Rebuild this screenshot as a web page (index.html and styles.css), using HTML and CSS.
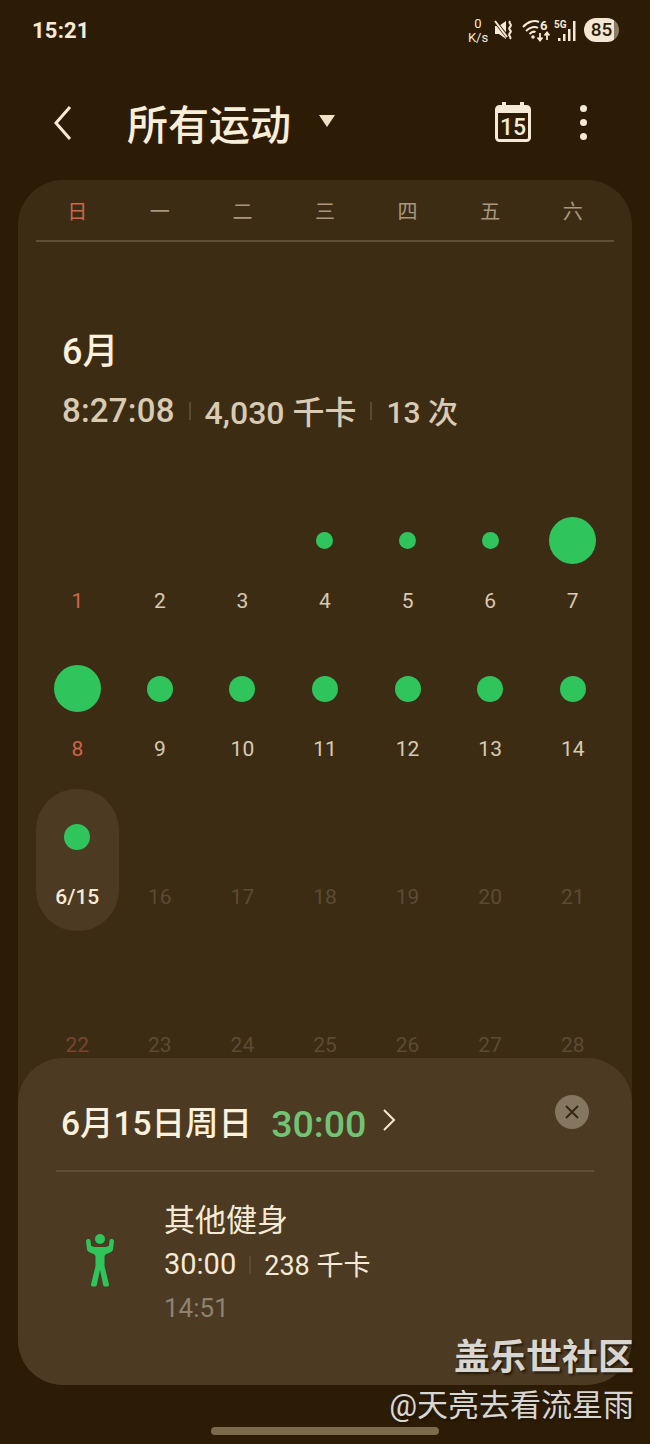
FILE: index.html
```html
<!DOCTYPE html>
<html lang="zh-CN">
<head>
    <meta charset="UTF-8">
    <meta name="viewport" content="width=device-width, initial-scale=1.0">
    <title>所有运动</title>
    <link rel="stylesheet" href="styles.css">
</head>
<body>
<div class="page">

    <!-- status bar -->
    <div class="status">
        <span class="clock">15:21</span>
        <div class="status-icons">
            <div class="speed"><span>0</span><span>K/s</span></div>
            <svg class="ic-mute" width="20" height="20" viewBox="0 0 20 20">
                <path d="M1 6h4l7-5v18l-7-5H1z" fill="#f6ead6"/>
                <path d="M0 0l15 19" stroke="#2c1b05" stroke-width="3.500"/>
                <path d="M1 1l12 16" stroke="#f6ead6" stroke-width="2"/>
                <path d="M16 1c-2 3 3 3 0 6s3 3 0 6 2 3 0 6" fill="none" stroke="#f6ead6" stroke-width="2"/>
            </svg>
            <svg class="ic-wifi" width="28" height="24" viewBox="0 0 28 24">
                <path d="M1 9c5-6 12-7 16-5M4 13c4-4 9-5 12-3M7.500 16c2-2 4-3 6-2" fill="none" stroke="#f6ead6" stroke-width="2"/>
                <circle cx="11" cy="19" r="1.800" fill="#f6ead6"/>
                <text class="wifi-6" x="18" y="12">6</text>
                <path d="M18 15v7M15.500 19.500l2.500 3 2.500-3M25 22v-7M22.500 17.500l2.500-3 2.500 3" fill="none" stroke="#f6ead6" stroke-width="1.800"/>
            </svg>
            <svg class="ic-signal" width="24" height="24" viewBox="0 0 24 24">
                <text class="signal-5g" x="0" y="10">5G</text>
                <rect x="4" y="20" width="2.500" height="3" fill="#f6ead6"/>
                <rect x="9" y="16" width="2.500" height="7" fill="#f6ead6"/>
                <rect x="14" y="11" width="2.500" height="12" fill="#f6ead6"/>
                <rect x="19" y="3" width="2.500" height="20" fill="#f6ead6"/>
            </svg>
            <div class="battery">85</div>
        </div>
    </div>

    <!-- title bar -->
    <div class="topbar">
        <svg class="back" width="20" height="36" viewBox="0 0 20 36">
            <path d="M17 2L3 18l14 16" fill="none" stroke="#f6ead6" stroke-width="3"/>
        </svg>
        <h1>所有运动</h1>
        <svg class="caret" width="16" height="12" viewBox="0 0 16 12">
            <path d="M0 0h16L8 12z" fill="#f0e2c8"/>
        </svg>
        <svg class="cal" width="36" height="40" viewBox="0 0 36 40">
            <path d="M9 1v6M27 1v6" stroke="#f6ead6" stroke-width="4" stroke-linecap="round"/>
            <rect x="1.500" y="4.500" width="33" height="34" rx="3" fill="none" stroke="#f6ead6" stroke-width="3"/>
            <rect x="2" y="5" width="32" height="6" fill="#f6ead6"/>
            <text x="18" y="33">15</text>
        </svg>
        <div class="more"><i></i><i></i><i></i></div>
    </div>

    <!-- calendar -->
    <div class="card">
        <div class="weekdays">
            <span class="sun">日</span><span>一</span><span>二</span><span>三</span><span>四</span><span>五</span><span>六</span>
        </div>

        <div class="month">
            <h2>6月</h2>
            <div class="stats">
                <span class="total">8:27:08</span><i class="sep"></i><span class="nudge">4,030 千卡</span><i class="sep"></i><span class="nudge count">13 次</span>
            </div>
        </div>

        <div class="weeks">
            <div class="day"><div class="slot"></div><span class="num sun">1</span></div>
            <div class="day"><div class="slot"></div><span class="num">2</span></div>
            <div class="day"><div class="slot"></div><span class="num">3</span></div>
            <div class="day"><div class="slot"><b class="dot s"></b></div><span class="num">4</span></div>
            <div class="day"><div class="slot"><b class="dot s"></b></div><span class="num">5</span></div>
            <div class="day"><div class="slot"><b class="dot s"></b></div><span class="num">6</span></div>
            <div class="day"><div class="slot"><b class="dot l"></b></div><span class="num">7</span></div>

            <div class="day"><div class="slot"><b class="dot l"></b></div><span class="num sun">8</span></div>
            <div class="day"><div class="slot"><b class="dot m"></b></div><span class="num">9</span></div>
            <div class="day"><div class="slot"><b class="dot m"></b></div><span class="num">10</span></div>
            <div class="day"><div class="slot"><b class="dot m"></b></div><span class="num">11</span></div>
            <div class="day"><div class="slot"><b class="dot m"></b></div><span class="num">12</span></div>
            <div class="day"><div class="slot"><b class="dot m"></b></div><span class="num">13</span></div>
            <div class="day"><div class="slot"><b class="dot m"></b></div><span class="num">14</span></div>

            <div class="day today"><div class="slot"><b class="dot m"></b></div><span class="num">6/15</span></div>
            <div class="day off"><div class="slot"></div><span class="num">16</span></div>
            <div class="day off"><div class="slot"></div><span class="num">17</span></div>
            <div class="day off"><div class="slot"></div><span class="num">18</span></div>
            <div class="day off"><div class="slot"></div><span class="num">19</span></div>
            <div class="day off"><div class="slot"></div><span class="num">20</span></div>
            <div class="day off"><div class="slot"></div><span class="num">21</span></div>

            <div class="day off"><div class="slot"></div><span class="num sun">22</span></div>
            <div class="day off"><div class="slot"></div><span class="num">23</span></div>
            <div class="day off"><div class="slot"></div><span class="num">24</span></div>
            <div class="day off"><div class="slot"></div><span class="num">25</span></div>
            <div class="day off"><div class="slot"></div><span class="num">26</span></div>
            <div class="day off"><div class="slot"></div><span class="num">27</span></div>
            <div class="day off"><div class="slot"></div><span class="num">28</span></div>
        </div>
    </div>

    <!-- bottom sheet, lies over the calendar -->
    <div class="sheet">
        <div class="sheet-head">
            <span class="sheet-date">6月15日周日</span>
            <span class="sheet-time">30:00</span>
            <svg class="sheet-arrow" width="14" height="24" viewBox="0 0 14 24">
                <path d="M2 2l10 10L2 22" fill="none" stroke="#f6ead6" stroke-width="2"/>
            </svg>
            <div class="close">
                <svg width="16" height="16" viewBox="0 0 16 16">
                    <path d="M2 2l12 12M14 2L2 14" stroke="#33240f" stroke-width="1.800"/>
                </svg>
            </div>
        </div>
        <div class="activity">
            <svg class="figure" width="32" height="54" viewBox="0 0 32 54">
                <circle cx="16" cy="5" r="5" fill="#2fc45c"/>
                <path d="M3 5.500c1-.8 3-.5 3.500 1l.5 5c1.500 1 3 1.500 5 1.500h8c2 0 3.500-.5 5-1.500l.5-5c.5-1.500 2.500-1.800 3.500-1 .8.500 1 1.300 1 2l-1 8c-.2 1.200-1 2-2 2.500l-5.500 2.500-1 1.500V32l4.500 18.500c.2 1.200-.6 2-1.800 2h-2c-1 0-1.700-.6-2-1.600L16 36l-3.200 14.900c-.3 1-1 1.600-2 1.600h-2c-1.200 0-2-.8-1.800-2L11.500 32V22l-1-1.500L5 18c-1-.5-1.800-1.300-2-2.500l-1-8c0-.7.200-1.500 1-2z" fill="#2fc45c"/>
            </svg>
            <div class="activity-info">
                <div class="activity-name">其他健身</div>
                <div class="activity-stats"><span class="activity-len">30:00</span><i class="sep"></i><span class="nudge">238 千卡</span></div>
                <div class="activity-at">14:51</div>
            </div>
        </div>
    </div>

    <div class="watermark">
        <div class="wm-big">盖乐世社区</div>
        <div class="wm-small">@天亮去看流星雨</div>
    </div>

    <div class="homebar"></div>
</div>
</body>
</html>
```

FILE: styles.css
```css
* {
    margin: 0;
    padding: 0;
    box-sizing: border-box;
}

body {
    background-color: #2c1b05;
    font-family: Roboto, "Noto Sans CJK SC", sans-serif;
    color: #f6ead6;
}

.page {
    position: relative;
    width: 650px;
    height: 1444px;
    overflow: hidden;
}

/* status bar */
.status {
    height: 60px;
    padding: 0 31px 0 32px;
    display: flex;
    align-items: center;
    justify-content: space-between;
}

.clock {
    font-size: 22px;
    font-weight: 700;
    letter-spacing: 0.2px;
}

.status-icons {
    display: flex;
    align-items: center;
}

.speed {
    width: 20px;
    display: flex;
    flex-direction: column;
    align-items: center;
    font-size: 13px;
    line-height: 14px;
    margin-right: 6px;
    margin-top: 2px;
}

.ic-mute {
    margin-right: 8px;
}

.ic-wifi {
    margin-right: 4px;
}

.wifi-6 {
    font-size: 13px;
    font-weight: 700;
    fill: #f6ead6;
}

.signal-5g {
    font-size: 10px;
    font-weight: 700;
    fill: #f6ead6;
}

.ic-signal {
    margin-right: 6px;
}

.battery {
    width: 35px;
    height: 24px;
    border-radius: 12px;
    background: linear-gradient(to right, #f3e6d2 86%, #8d7d64 86%);
    color: #2c1b05;
    font-size: 19px;
    font-weight: 500;
    line-height: 24px;
    text-align: center;
}

/* title bar */
.topbar {
    height: 120px;
    display: flex;
    align-items: center;
    padding-left: 53px;
}

.back {
    margin-right: 54px;
    margin-top: 5px;
}

h1 {
    font-size: 41px;
    font-weight: 500;
    line-height: 56px;
    margin-top: 12px;
    color: #f9eed9;
}

.caret {
    margin-left: 28px;
    margin-right: 160px;
    margin-top: 2px;
}

.cal {
    margin-top: 3px;
    margin-right: 49px;
}

.cal text {
    font-size: 23px;
    font-weight: 500;
    fill: #f6ead6;
    text-anchor: middle;
}

.more {
    display: flex;
    flex-direction: column;
    gap: 7px;
    margin-top: 4px;
}

.more i {
    width: 7px;
    height: 7px;
    border-radius: 50%;
    background-color: #f6ead6;
}

/* calendar card */
.card {
    height: 1205px;
    margin: 0 18px;
    padding: 0 18px;
    background-color: #3d2c14;
    border-radius: 45px;
}

.weekdays {
    display: grid;
    grid-template-columns: repeat(7, 1fr);
    height: 62px;
    align-items: center;
    text-align: center;
    font-size: 20px;
    color: #a89880;
    border-bottom: 2px solid #5f4f38;
}

.sun {
    color: #d0654b;
}

.month {
    height: 251px;
    padding: 87px 0 0 26px;
}

h2 {
    font-size: 36px;
    font-weight: 500;
    line-height: 46px;
    color: #fbf1dc;
}

.stats {
    margin-top: 13px;
    display: flex;
    align-items: center;
    font-size: 32px;
    font-weight: 500;
    line-height: 46px;
    color: #d8cab3;
}

.total {
    font-size: 33px;
    letter-spacing: 0.2px;
}

.count {
    font-size: 30px;
}

.sep {
    width: 2px;
    height: 18px;
    margin: 0 14px;
    background-color: #5a4a33;
}

.nudge {
    position: relative;
    top: 2px;
}

.weeks {
    display: grid;
    grid-template-columns: repeat(7, 1fr);
    row-gap: 6px;
}

.day {
    height: 142px;
    display: flex;
    flex-direction: column;
    align-items: center;
}

.slot {
    height: 95px;
    display: flex;
    align-items: center;
    justify-content: center;
}

.num {
    margin-top: -1px;
    font-size: 21px;
    line-height: 28px;
    color: #d8cab3;
}

.num.sun {
    color: #d0654b;
}

.dot {
    display: block;
    border-radius: 50%;
    background-color: #2fc45c;
}

.dot.s {
    width: 17px;
    height: 17px;
}

.dot.m {
    width: 26px;
    height: 26px;
}

.dot.l {
    width: 47px;
    height: 47px;
}

.today {
    background-color: #4c3a22;
    border-radius: 41px;
}

.today .num {
    font-weight: 500;
    color: #f6ead6;
}

.off .num {
    color: #5b4b34;
}

.off .num.sun {
    color: #7a4330;
}

/* bottom sheet */
.sheet {
    position: absolute;
    left: 18px;
    top: 1058px;
    width: 614px;
    height: 327px;
    padding: 0 38px;
    background-color: #4c3a22;
    border-radius: 45px;
}

.sheet-head {
    position: relative;
    height: 114px;
    padding: 40px 0 0 5px;
    display: flex;
    align-items: center;
    border-bottom: 2px solid #5f4f38;
}

.sheet-date {
    font-size: 33.500px;
    font-weight: 500;
    color: #fbf1dc;
    margin-right: 19px;
    line-height: 50px;
    height: 50px;
    margin-top: -21px;
}

.sheet-time {
    font-size: 37.500px;
    font-weight: 500;
    color: #72c475;
    margin-right: 16px;
    line-height: 50px;
    height: 50px;
    margin-top: -21px;
}

.sheet-arrow {
    margin-top: -29px;
}

.close {
    position: absolute;
    right: 5px;
    top: 37px;
    width: 34px;
    height: 34px;
    border-radius: 50%;
    background-color: #85765f;
    display: flex;
    align-items: center;
    justify-content: center;
}

.activity {
    display: flex;
    align-items: center;
    padding: 27px 0 0 28px;
}

.figure {
    margin-right: 48px;
    margin-top: -8px;
}

.activity-name {
    font-size: 31px;
    line-height: 44px;
    color: #f6ead6;
}

.activity-stats {
    display: flex;
    align-items: center;
    font-size: 27px;
    line-height: 43px;
    color: #f6ead6;
}

.activity-len {
    font-size: 29px;
}

.activity-stats .sep {
    margin: 0 13px;
}

.activity-at {
    font-size: 26px;
    line-height: 44px;
    color: #8f8270;
}

/* watermark */
.watermark {
    position: absolute;
    right: 16px;
    top: 1333px;
    text-align: right;
    text-shadow: 2px 2px 2px rgba(30, 20, 5, 0.8);
}

.wm-big {
    font-size: 36px;
    font-weight: 700;
    line-height: 50px;
    color: #d8d6d2;
}

.wm-small {
    font-size: 31px;
    line-height: 46px;
    color: #d8d6d2;
}

.homebar {
    position: absolute;
    left: 211px;
    top: 1427px;
    width: 228px;
    height: 8px;
    border-radius: 4px;
    background-color: #7b6a4c;
}
```
